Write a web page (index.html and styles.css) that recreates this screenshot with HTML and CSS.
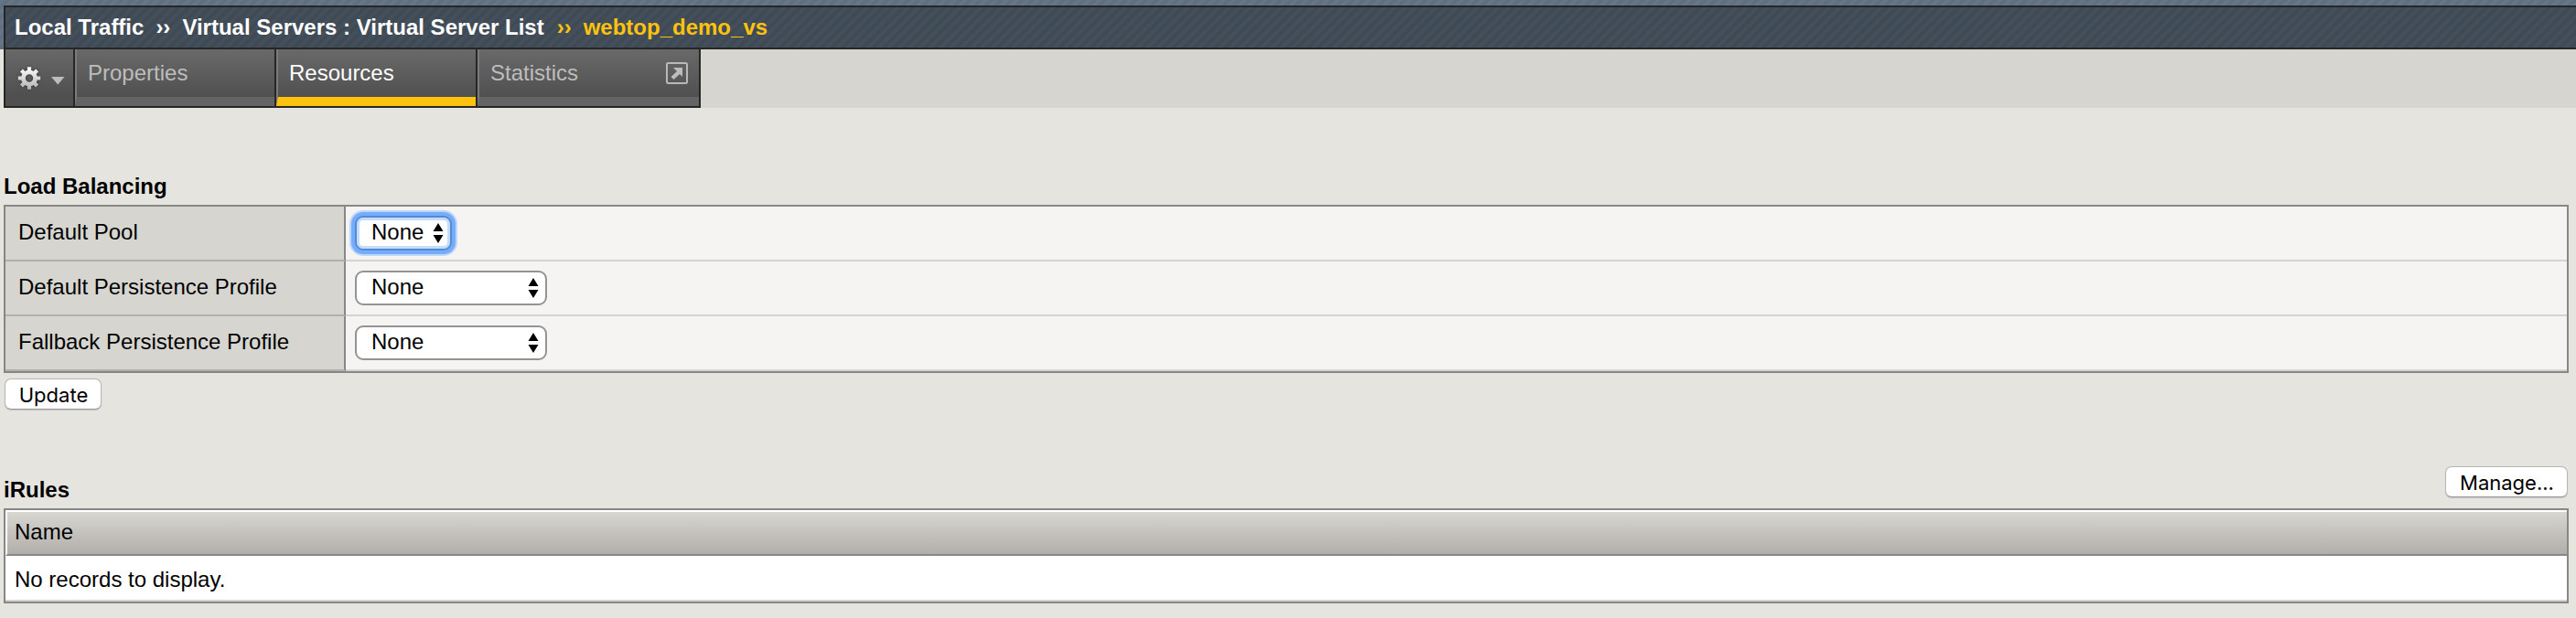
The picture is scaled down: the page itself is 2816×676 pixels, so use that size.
FILE: index.html
```
<!DOCTYPE html>
<html lang="en">
<head>
<meta charset="utf-8">
<title>Virtual Server Resources</title>
<link rel="stylesheet" href="styles.css">
</head>
<body>
<header class="masthead">
  <nav class="breadcrumb">
    <span class="crumb-a">Local Traffic</span><span class="sep sep-a">››</span><span class="crumb-b">Virtual Servers : Virtual Server List</span><span class="sep sep-b">››</span><span class="current">webtop_demo_vs</span>
  </nav>
</header>
<div class="tabstrip">
  <div class="tabs">
    <div class="tab gear">
      <svg width="64" height="40" viewBox="0 0 64 40">
        <defs><linearGradient id="g" gradientUnits="userSpaceOnUse" x1="0" y1="7" x2="0" y2="32"><stop offset="0" stop-color="#fff"/><stop offset="1" stop-color="#b0b0b0"/></linearGradient></defs>
        <g class="gear-shadow" fill="none" stroke="url(#g)">
          <circle cx="16" cy="19.500" r="6.600" stroke-width="4.800"/>
          <path stroke-width="4.200" d="M16.010 7.300L16 12M16.010 31.700L16 27M3.800 19.510L8.500 19.500M28.200 19.510L23.500 19.500M7.400 10.900L10.700 14.200M24.600 28.100L21.300 24.800M24.600 10.900L21.300 14.200M7.400 28.100L10.700 24.800"/>
        </g>
        <path fill="#bdbdbd" d="M40 18h14.500l-7.250 8.500z"/>
      </svg>
    </div>
    <div class="tab properties">Properties</div>
    <div class="tab resources active">Resources</div>
    <div class="tab statistics"><span>Statistics</span>
      <svg width="24" height="24" viewBox="0 0 24 24"><rect x="1" y="1" width="22" height="22" rx="1.500" fill="none" stroke="#b8b8b8" stroke-width="2"/><path d="M8 6h10v10l-3-3-6.500 6-3-3 6.500-6z" fill="#bdbdbd"/></svg>
    </div>
  </div>
</div>
<main>
  <h2 class="load-title">Load Balancing</h2>
  <div class="settings">
    <div class="label">Default Pool</div>
    <div class="field"><div class="select small focused">None<svg class="arrows" width="12" height="22" viewBox="0 0 12 22"><path d="M.5 9L6 0l5.500 9zM.5 13h11L6 22z"/></svg></div></div>
    <div class="label">Default Persistence Profile</div>
    <div class="field"><div class="select">None<svg class="arrows" width="12" height="22" viewBox="0 0 12 22"><path d="M.5 9L6 0l5.500 9zM.5 13h11L6 22z"/></svg></div></div>
    <div class="label">Fallback Persistence Profile</div>
    <div class="field"><div class="select">None<svg class="arrows" width="12" height="22" viewBox="0 0 12 22"><path d="M.5 9L6 0l5.500 9zM.5 13h11L6 22z"/></svg></div></div>
  </div>
  <button class="button update">Update</button>
  <div class="rules-bar">
    <h2>iRules</h2>
    <button class="button manage">Manage...</button>
  </div>
  <div class="rules">
    <div class="rules-head">Name</div>
    <div class="rules-empty">No records to display.</div>
  </div>
</main>
</body>
</html>
```
FILE: styles.css
```
* { box-sizing: border-box; }
body { margin: 0; height: 676px; overflow: hidden; background: #e5e4df; color: #000; font: 24px/28px "Liberation Sans", Arial, sans-serif; }
.masthead { height: 54px; padding: 6px 0 0 4px; background: repeating-linear-gradient(135deg, #657687 0 4px, #617080 4px 8px); }
.breadcrumb { display: flex; height: 48px; padding: 8px 0 0 10px; border: solid #262626; border-width: 2px 0 2px 2px; background: repeating-linear-gradient(135deg, #434f5a 0 4px, #3f4a54 4px 8px); color: #fff; font-weight: bold; white-space: pre; }
.sep { width: 16px; }
.sep-a { margin: 0 13px 0 13px; }
.sep-b { margin: 0 13px 0 14px; color: #ffc20e; }
.current { color: #ffc20e; }
.tabstrip { height: 64px; padding-left: 4px; background: linear-gradient(90deg, #e5e4df 4px, #d6d5d0 4px); }
.tabs { display: flex; width: 762px; height: 64px; border: solid #262626; border-width: 0 2px 2px; }
.tab { height: 62px; padding: 12px 0 0 12px; border-left: 2px solid #7b7b7b; border-bottom: 10px solid #646464; background: linear-gradient(#696969, #505050) padding-box; color: #bdbdbd; }
.gear { width: 74px; padding: 12px 0 0 10px; border: 0; background: linear-gradient(#696969, #505050 50px); }
.gear-shadow { filter: drop-shadow(0 0 1.5px #333); }
.properties, .resources { width: 218px; margin-left: 2px; box-shadow: -2px 0 #262626; }
.statistics { display: flex; justify-content: space-between; width: 242px; margin-left: 2px; padding-right: 12px; box-shadow: -2px 0 #262626; }
.statistics svg { margin-top: 2px; }
.active { border-bottom-color: #ffc20e; color: #fff; }
main { padding: 72px 8px 0 4px; }
h2 { margin: 0; font: bold 24px/28px "Liberation Sans", Arial, sans-serif; }
.load-title { height: 34px; }
.settings { display: grid; grid-template-columns: 372px 1fr; border: 2px solid #878787; }
.label, .field { height: 60px; border-bottom: 2px solid #b1b0ab; }
.label { padding: 14px 0 0 14px; background: #d6d5d0; border-right: 2px solid #878787; }
.field { padding: 10px 0 0 10px; background: #f5f4f2; border-bottom-color: #d4d4d3; }
.select { display: flex; justify-content: space-between; width: 210px; height: 38px; padding: 2px 7px 0 16px; border: 2px solid #949494; border-radius: 9px; background: #fff; }
.small { width: 106px; }
.focused { border-color: #568bd2; box-shadow: 0 0 0 4px #74adfc, 0 0 0 6px #bfd6f6, inset 0 0 0 3px #c4ddfc; }
.arrows { margin-top: 4px; }
.button { display: block; height: 34px; margin: 0; padding: 2px 0 0 1px; border: 1px solid #b5b5b3; border-bottom-color: #979795; border-radius: 7px; background: #fff; box-shadow: 0 1px 1px #c4c4c1; color: #000; font: 22px/30px Inter, "Liberation Sans", sans-serif; }
.update { width: 106px; margin: 6px 0 0 1px; }
.manage { width: 134px; margin-right: 1px; }
.rules-bar { display: flex; justify-content: space-between; height: 46px; margin-top: 62px; }
.rules-bar h2 { margin-top: 12px; }
.rules { border: 2px solid #878787; }
.rules-head { height: 50px; padding: 8px 0 0 8px; border: solid #fff; border-width: 2px 0 2px 2px; border-bottom-color: #878787; background: linear-gradient(#d7d6d1, #b2aeaa); }
.rules-empty { height: 50px; padding: 12px 0 0 10px; border-bottom: 2px solid #d4d4d3; background: #fff; }
```
